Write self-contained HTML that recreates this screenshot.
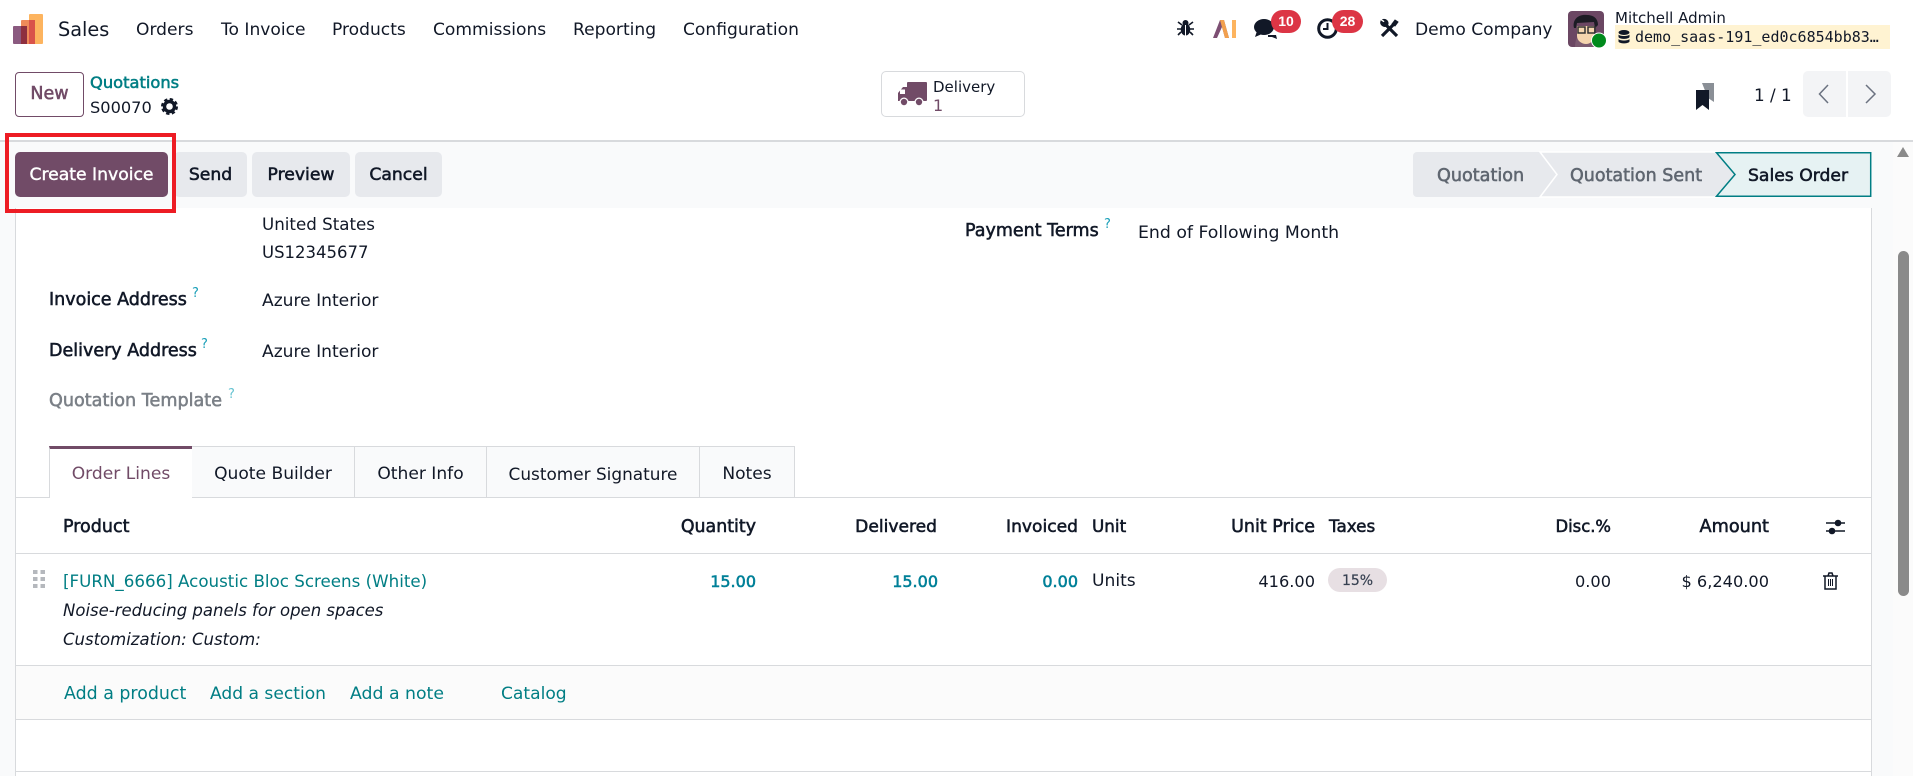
<!DOCTYPE html>
<html lang="en"><head><meta charset="utf-8"><title>S00070 - Sales</title>
<style>
html,body{margin:0;padding:0;width:1913px;height:776px;overflow:hidden;background:#fff}
body{position:relative;font-family:"DejaVu Sans","Liberation Sans",sans-serif;font-size:17.100px;color:#111827}
.t{position:absolute;white-space:nowrap;line-height:24px;height:24px}
.r{text-align:right}
.b{-webkit-text-stroke:.55px currentColor}
.box{position:absolute;box-sizing:border-box}
.teal{color:#017e84}
.blue{color:#008098}
.q{position:absolute;font-size:13px;line-height:14px;color:#1a9fb8}
.tab{position:absolute;box-sizing:border-box;top:446px;height:52px;background:#f9fafb;border:1px solid #d8dadd;border-left:0;text-align:center;line-height:54px;font-size:17.100px}
.btn{position:absolute;box-sizing:border-box;top:152px;height:45px;background:#e7e9ed;border-radius:5px;text-align:center;line-height:47px;font-size:17.200px}
.badge{position:absolute;box-sizing:border-box;top:10px;height:23px;border-radius:12px;background:#dc3545;color:#fff;font-family:"Liberation Sans",sans-serif;font-size:14px;font-weight:bold;line-height:23px;text-align:center}
svg{position:absolute;overflow:visible}
</style></head><body>

<!-- backgrounds -->
<div class="box" style="left:0;top:140px;width:1913px;height:636px;background:#f9fafb"></div>
<div class="box" style="left:0;top:140px;width:1913px;height:2px;background:#d8dadd"></div>
<div class="box" style="left:1893px;top:142px;width:20px;height:634px;background:#fbfbfb"></div>
<div class="box" style="left:15px;top:208px;width:1857px;height:568px;background:#fff;border-left:1px solid #d8dadd;border-right:1px solid #d8dadd"></div>

<!-- navbar -->
<svg style="left:13px;top:14px" width="31" height="31" viewBox="0 0 31 31">
<rect x="16" y="0" width="14" height="30" rx="1" fill="#fdb45f"/>
<rect x="8" y="6" width="14" height="24" rx="1" fill="#ef8a5a"/>
<rect x="16" y="6" width="6" height="24" fill="#d9534a"/>
<rect x="0" y="12" width="14" height="18" rx="1" fill="#8b5a80"/>
<rect x="8" y="12" width="6" height="18" fill="#8e2f3f"/></svg>
<span class="t" style="left:58px;top:18px;font-size:19.300px">Sales</span>
<span class="t" style="left:136px;top:18px">Orders</span>
<span class="t" style="left:221px;top:18px">To Invoice</span>
<span class="t" style="left:332px;top:18px">Products</span>
<span class="t" style="left:433px;top:18px">Commissions</span>
<span class="t" style="left:573px;top:18px">Reporting</span>
<span class="t" style="left:683px;top:18px">Configuration</span>

<!-- systray -->
<svg style="left:1177px;top:20px" width="17" height="16" viewBox="0 0 17 16" fill="#111827">
<ellipse cx="8.500" cy="9.500" rx="4.800" ry="6"/><circle cx="8.500" cy="3" r="3"/>
<path d="M1 2l4 3M16 2l-4 3M0 9h4M17 9h-4M1 15l3-3M16 15l-3-3" stroke="#111827" stroke-width="1.600" fill="none"/>
<rect x="8" y="5" width="1" height="11" fill="#fff"/></svg>
<svg style="left:1213px;top:19px" width="24" height="19" viewBox="0 0 24 19">
<path d="M0 19L7 1h4l5 18h-4l-3-11-5 11z" fill="#7d4f73"/><path d="M7 1h4l5 18h-4z" fill="#f2a04e"/>
<rect x="19" y="1" width="4" height="18" fill="#fdb45f"/></svg>
<svg style="left:1254px;top:19px" width="25" height="21" viewBox="0 0 25 21" fill="#111827">
<ellipse cx="10" cy="8" rx="10" ry="8"/><path d="M3 12l-2 6 7-3z"/>
<path d="M14 16h8l1 4-5-2h-4z"/></svg>
<div class="badge" style="left:1271px;width:30px">10</div>
<svg style="left:1317px;top:18px" width="21" height="21" viewBox="0 0 21 21" fill="none" stroke="#111827" stroke-width="3">
<circle cx="10.500" cy="10.500" r="8.800"/><path d="M10.500 5v6H6" stroke-width="2"/></svg>
<div class="badge" style="left:1332px;width:31px">28</div>
<svg style="left:1380px;top:19px" width="19" height="19" viewBox="0 0 19 19" fill="none" stroke="#111827">
<path d="M2 17L14 5" stroke-width="3.200"/><path d="M12 5l3-4 3 2-3 4z" fill="#111827" stroke-width="1"/>
<path d="M17 17L6 6" stroke-width="3.200"/><path d="M6.500 7A4 4 0 0 1 1 2l3 2 1-2-2-1.500A4 4 0 0 1 8 5z" fill="#111827" stroke-width="1"/></svg>
<span class="t" style="left:1415px;top:18px">Demo Company</span>

<svg style="left:1568px;top:11px" width="38" height="37" viewBox="0 0 38 37">
<rect width="36" height="36" rx="4" fill="#6b4763"/>
<path d="M7 36c0-9 4-14 11-14s12 5 12 14z" fill="#7b5a70"/>
<path d="M9 15h17v10c0 5-4 8-8 8s-9-3-9-8z" fill="#f5d5ae"/>
<path d="M6 17C4 8 11 3 19 4c6 0 11 3 11 10l-3 3-1-6-17 1-1 5z" fill="#1c1c24"/>
<rect x="10" y="16" width="7" height="6" fill="none" stroke="#333" stroke-width="1.500"/><rect x="20" y="16" width="7" height="6" fill="none" stroke="#333" stroke-width="1.500"/>
<circle cx="31" cy="29.500" r="7.500" fill="#008a1c" stroke="#fff" stroke-width="1"/></svg>
<span class="t" style="left:1615px;top:6px;font-size:15px">Mitchell Admin</span>
<div class="box" style="left:1615px;top:25px;width:275px;height:24px;background:#fff3d2"></div>
<svg style="left:1618px;top:30px" width="12" height="14" viewBox="0 0 12 14" fill="#111827">
<ellipse cx="6" cy="2.500" rx="5.500" ry="2.500"/><path d="M.5 4.500c1 2 10 2 11 0v2.500c-1 2.500-10 2.500-11 0zM.5 9c1 2 10 2 11 0v2.500c-1 2.500-10 2.500-11 0z"/></svg>
<span class="t" style="left:1635px;top:25px;font-family:'DejaVu Sans Mono','Liberation Mono',monospace;font-size:15px">demo_saas-191_ed0c6854bb83…</span>

<!-- control panel -->
<div class="box" style="left:15px;top:72px;width:69px;height:45px;border:1px solid #714b67;border-radius:4px;background:#fff;color:#714b67;text-align:center;line-height:43px;font-size:17.500px"><span class="b">New</span></div>
<span class="t teal b" style="left:90px;top:71px;font-size:16.300px">Quotations</span>
<span class="t" style="left:90px;top:96px;font-size:16.200px">S00070</span>
<svg style="left:161px;top:98px" width="17" height="17" viewBox="0 0 17 17">
<circle cx="8.500" cy="8.500" r="5" fill="none" stroke="#111827" stroke-width="3.400"/>
<circle cx="8.500" cy="8.500" r="7" fill="none" stroke="#111827" stroke-width="3" stroke-dasharray="3.200 2.300"/></svg>

<div class="box" style="left:881px;top:71px;width:144px;height:46px;border:1px solid #d8dadd;border-radius:5px;background:#fff"></div>
<svg style="left:897px;top:82px" width="30" height="26" viewBox="0 0 30 26" fill="#714b67">
<rect x="10" y="0" width="20" height="19" rx="1"/><path d="M1 19V11l5-6h5v14z"/><rect x="3" y="7.500" width="5" height="4.500" fill="#fff"/>
<circle cx="7" cy="20" r="4.500" fill="#fff"/><circle cx="7" cy="20" r="3.200"/><circle cx="22" cy="20" r="4.500" fill="#fff"/><circle cx="22" cy="20" r="3.200"/></svg>
<span class="t" style="left:933px;top:75px;font-size:15px">Delivery</span>
<span class="t" style="left:933px;top:94px;font-size:16px;color:#714b67">1</span>

<svg style="left:1696px;top:83px" width="19" height="27" viewBox="0 0 19 27">
<path d="M6 0h12v19l-6-4z" fill="#8a8f96"/><path d="M0 7h13v20l-6.500-5L0 27z" fill="#111827"/></svg>
<span class="t" style="left:1754px;top:83px;font-size:16.800px">1 / 1</span>
<div class="box" style="left:1803px;top:71px;width:43px;height:46px;background:#f3f4f6;border-radius:5px 0 0 5px"></div>
<div class="box" style="left:1848px;top:71px;width:43px;height:46px;background:#f3f4f6;border-radius:0 5px 5px 0"></div>
<svg style="left:1818px;top:84px" width="60" height="20" viewBox="0 0 60 20" fill="none" stroke="#6b7280" stroke-width="1.500">
<path d="M10 1L1.500 10 10 19"/><path d="M48 1l9 9-9 9"/></svg>

<!-- action buttons -->
<div class="btn" style="left:15px;width:153px;background:#714b67;color:#fff"><span class="b" style="-webkit-text-stroke-width:.4px">Create Invoice</span></div>
<div class="btn" style="left:174px;width:73px"><span class="b">Send</span></div>
<div class="btn" style="left:252px;width:98px"><span class="b">Preview</span></div>
<div class="btn" style="left:355px;width:87px"><span class="b">Cancel</span></div>
<div class="box" style="left:5px;top:133px;width:171px;height:80px;border:4px solid #ed1c24"></div>

<!-- statusbar -->
<svg style="left:1413px;top:152px" width="459" height="45" viewBox="0 0 459 45">
<path d="M4 0H127L144 22.500 127 45H4a4 4 0 0 1-4-4V4a4 4 0 0 1 4-4z" fill="#e7e9ed"/>
<path d="M127 0L144 22.500 127 45H304L323 22.500 304 0z" fill="#e7e9ed" stroke="#fff" stroke-width="1.500"/>
<path d="M303.500 .7H457.700V44.300H303.500L322 22.500z" fill="#e6f2f3" stroke="#017e84" stroke-width="1.500"/></svg>
<span class="t b" style="left:1437px;top:164px;color:#5f6670;font-size:17.600px">Quotation</span>
<span class="t b" style="left:1570px;top:164px;color:#5f6670;font-size:17.500px">Quotation Sent</span>
<span class="t b" style="left:1748px;top:164px;font-size:17.200px">Sales Order</span>

<!-- scrollbar -->
<svg style="left:1897px;top:147px" width="12" height="10"><path d="M6 0l6 10H0z" fill="#8a8a8a"/></svg>
<div class="box" style="left:1898px;top:251px;width:11px;height:345px;background:#8a8a8a;border-radius:6px"></div>

<!-- form -->
<span class="t" style="left:262px;top:212px;font-size:16.700px">United States</span>
<span class="t" style="left:262px;top:241px;font-size:16.500px">US12345677</span>
<span class="t b" style="left:965px;top:219px;font-size:17.500px">Payment Terms</span><span class="q" style="left:1104px;top:218px">?</span>
<span class="t" style="left:1138px;top:221px;font-size:17.300px">End of Following Month</span>
<span class="t b" style="left:49px;top:288px;font-size:17.500px">Invoice Address</span><span class="q" style="left:192px;top:287px">?</span>
<span class="t" style="left:262px;top:289px">Azure Interior</span>
<span class="t b" style="left:49px;top:339px;font-size:17.500px">Delivery Address</span><span class="q" style="left:201px;top:338px">?</span>
<span class="t" style="left:262px;top:340px">Azure Interior</span>
<span class="t b" style="left:49px;top:389px;font-size:17.600px;color:#7b8087">Quotation Template</span><span class="q" style="left:228px;top:388px;color:#66c3d1">?</span>

<!-- tabs -->
<div class="box" style="left:15px;top:497px;width:1857px;height:1px;background:#d8dadd"></div>
<div class="tab" style="left:49px;width:144px;background:#fff;border-left:1px solid #d8dadd;border-top:3px solid #714b67;border-bottom:0;color:#714b67;line-height:50px">Order Lines</div>
<div class="tab" style="left:192px;width:163px">Quote Builder</div>
<div class="tab" style="left:355px;width:132px">Other Info</div>
<div class="tab" style="left:487px;width:213px;font-size:16.900px">Customer Signature</div>
<div class="tab" style="left:700px;width:95px">Notes</div>

<!-- table header -->
<div class="box" style="left:16px;top:553px;width:1855px;height:1px;background:#d8dadd"></div>
<span class="t b" style="left:63px;top:515px;font-size:17.500px">Product</span>
<span class="t b r" style="right:1157px;top:515px;font-size:17.400px">Quantity</span>
<span class="t b r" style="right:976px;top:515px;font-size:17.100px">Delivered</span>
<span class="t b r" style="right:835px;top:515px;font-size:17.100px">Invoiced</span>
<span class="t b" style="left:1092px;top:514px;font-size:16.800px">Unit</span>
<span class="t b r" style="right:598px;top:515px;font-size:17.500px">Unit Price</span>
<span class="t b" style="left:1329px;top:514px;font-size:16.800px">Taxes</span>
<span class="t b r" style="right:302px;top:515px;font-size:16.400px">Disc.%</span>
<span class="t b r" style="right:144px;top:515px;font-size:17.700px">Amount</span>
<svg style="left:1826px;top:519px" width="19" height="16" viewBox="0 0 19 16" stroke="#111827" stroke-width="1.600" fill="#111827">
<path d="M0 4h19M0 12h19"/><circle cx="12" cy="4" r="2.500"/><circle cx="6" cy="12" r="2.500"/></svg>

<!-- row -->
<svg style="left:33px;top:570px" width="12" height="18" fill="#b5b8bd"><rect width="4.500" height="4"/><rect x="7.500" width="4.500" height="4"/><rect y="7" width="4.500" height="4"/><rect x="7.500" y="7" width="4.500" height="4"/><rect y="14" width="4.500" height="4"/><rect x="7.500" y="14" width="4.500" height="4"/></svg>
<span class="t teal" style="left:63px;top:569px;font-size:16.700px">[FURN_6666] Acoustic Bloc Screens (White)</span>
<span class="t" style="left:63px;top:599px;font-style:italic;font-size:16.500px">Noise-reducing panels for open spaces</span>
<span class="t" style="left:63px;top:628px;font-style:italic;font-size:16.500px">Customization: Custom:</span>
<span class="t b r blue" style="right:1157px;top:570px;font-size:16px">15.00</span>
<span class="t b r blue" style="right:975px;top:570px;font-size:16px">15.00</span>
<span class="t b r blue" style="right:835px;top:570px;font-size:16px">0.00</span>
<span class="t" style="left:1092px;top:569px">Units</span>
<span class="t r" style="right:598px;top:570px;font-size:16.200px">416.00</span>
<div class="box" style="left:1328px;top:568px;width:59px;height:24px;background:#e7dfe3;border-radius:12px;text-align:center;line-height:26px;font-size:14px;color:#374151;-webkit-text-stroke:.2px #374151">15%</div>
<span class="t r" style="right:302px;top:570px;font-size:16.200px">0.00</span>
<span class="t r" style="right:144px;top:570px;font-size:16.200px">$ 6,240.00</span>
<svg style="left:1823px;top:572px" width="15" height="18" viewBox="0 0 15 18" fill="none" stroke="#111827" stroke-width="1.500">
<path d="M0 4h15M5 4l1-3h3l1 3"/><path d="M2 4v13h11V4"/><path d="M5.500 7v7M7.500 7v7M9.500 7v7" stroke-width="1"/></svg>

<div class="box" style="left:16px;top:665px;width:1855px;height:55px;background:#fbfbfb;border-top:1px solid #d8dadd;border-bottom:1px solid #d8dadd"></div>
<span class="t teal" style="left:64px;top:682px;font-size:17.400px">Add a product</span>
<span class="t teal" style="left:210px;top:682px">Add a section</span>
<span class="t teal" style="left:350px;top:682px;font-size:17.300px">Add a note</span>
<span class="t teal" style="left:501px;top:682px">Catalog</span>
<div class="box" style="left:16px;top:771px;width:1855px;height:1px;background:#d8dadd"></div>
</body></html>
